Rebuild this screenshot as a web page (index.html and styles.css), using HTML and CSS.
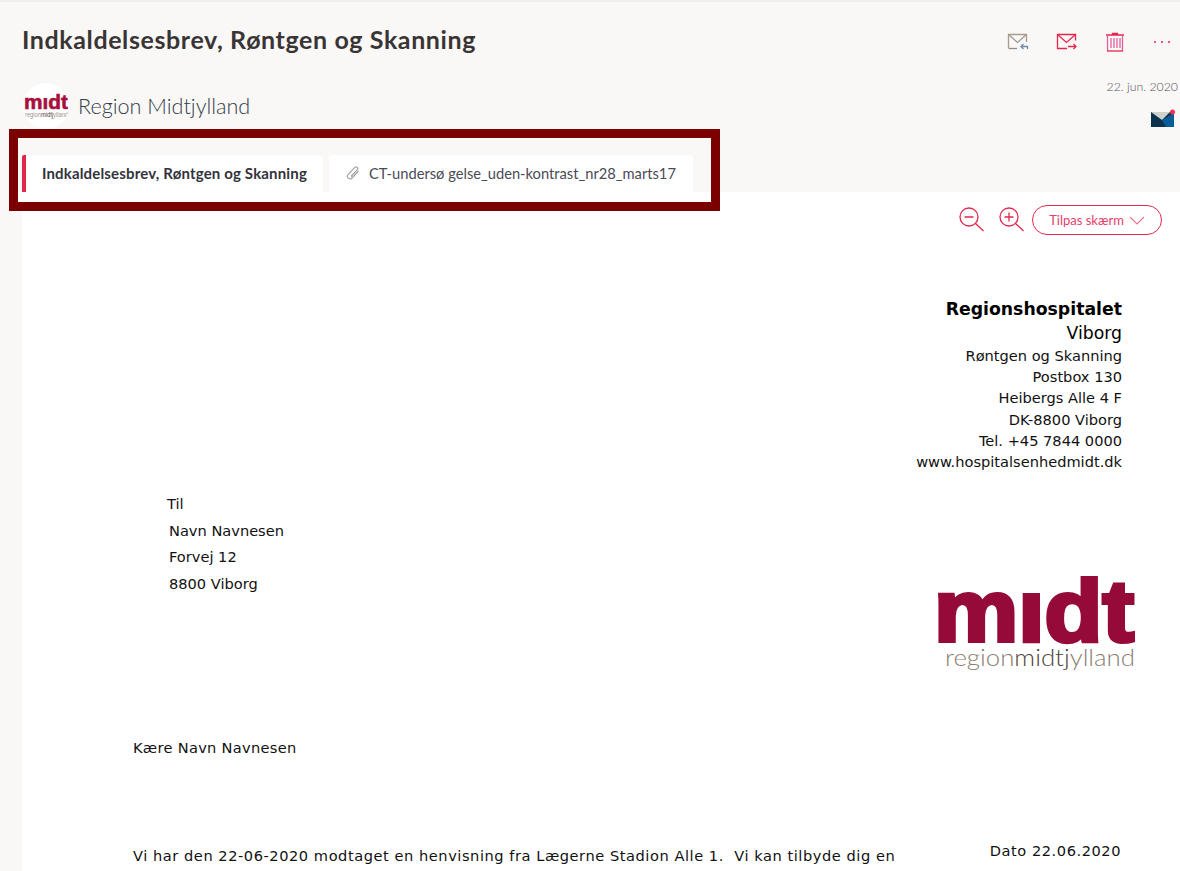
FILE: index.html
```html
<!DOCTYPE html>
<html lang="da">
<head>
<meta charset="utf-8">
<title>Indkaldelsesbrev, Røntgen og Skanning</title>
<link rel="stylesheet" href="styles.css">
</head>
<body>
<div class="page">
  <header class="head">
    <div class="title-row">
      <h1 class="title">Indkaldelsesbrev, Røntgen og Skanning</h1>
      <div class="actions">
        <svg class="act" viewBox="0 0 22 18" fill="none" stroke="#8c8c8c" stroke-width="1.300"><path d="M1.500 15V1.500h18V9" stroke="#a89c8c"/><path d="M1.500 15.500H10"/><path d="M1.500 1.500l9 8 9-8" stroke="#9a9a96"/><path d="M20.500 16v-2.500h-6M16.500 11l-2.500 2.500 2.500 2.500" stroke="#6f8aa6"/></svg>
        <svg class="act" viewBox="0 0 22 18" fill="none" stroke="#e5264c" stroke-width="1.300"><path d="M11 15.500H1.500V1.500h18v6"/><path d="M1.500 1.500l9 8 9-8"/><path d="M12 13.500h8M17.500 11l2.500 2.500-2.500 2.500"/></svg>
        <svg class="act trash" viewBox="0 0 20 20" fill="none" stroke="#e0609f" stroke-width="1.300"><path d="M1 3h18M7.500 2.500V1.500h5v1" stroke="#e5264c"/><path d="M2.500 3.500V19M17.500 3.500V19"/><path d="M6 6v10M9 6v10M12 6v10M15 6v10"/><path d="M2 19h16" stroke="#e5264c"/></svg>
        <span class="dots"><i></i><i></i><i></i></span>
      </div>
    </div>
    <div class="sender-row">
      <div class="sender">
        <div class="avatar">
          <svg viewBox="0 0 46 46" width="46" height="46">
            <text x="1" y="26" class="av-mark" textLength="44" lengthAdjust="spacingAndGlyphs">midt</text>
            <rect x="19" y="6" width="6.500" height="9" fill="#fff"/>
            <text x="2" y="34" class="av-sub" textLength="43" lengthAdjust="spacingAndGlyphs">region<tspan class="av-dark">midtj</tspan>ylland</text>
          </svg>
        </div>
        <span class="sender-name">Region Midtjylland</span>
      </div>
      <div class="meta">
        <span class="date">22. jun. 2020</span>
        <svg class="mail" viewBox="0 0 24 18" width="24" height="18">
          <path d="M0 3h23v15H0z" fill="#0b3350"/>
          <path d="M0 3h19L11 11z" fill="#d0d0cc"/>
          <path d="M23 4v14h-8l-4-7z" fill="#0a5c96"/>
          <circle cx="21.500" cy="3" r="2.500" fill="#f2304f"/>
        </svg>
      </div>
    </div>
    <nav class="tabs">
      <div class="tab active">Indkaldelsesbrev, Røntgen og Skanning</div>
      <div class="tab">
        <svg class="clip" viewBox="0 0 14 14" fill="none" stroke="#a3a3a3" stroke-width="1.200"><path d="M12.500 5L6 12a2.600 2.600 0 0 1-3.800-3.600L8.800 1.400a1.700 1.700 0 0 1 2.500 2.300L5 10.500"/></svg>
        CT-undersø gelse_uden-kontrast_nr28_marts17
      </div>
    </nav>
  </header>

  <main class="viewer">
    <div class="tools">
      <svg class="zoom" viewBox="0 0 26 26" fill="none" stroke="#e5264c" stroke-width="1.300"><circle cx="10" cy="10" r="9"/><path d="M5.500 10h9M16.500 16.500l8 7.500"/></svg>
      <svg class="zoom" viewBox="0 0 26 26" fill="none" stroke="#e5264c" stroke-width="1.300"><circle cx="10" cy="10" r="9"/><path d="M5.500 10h9M10 5.500v9M16.500 16.500l8 7.500"/></svg>
      <button class="fit">Tilpas skærm
        <svg viewBox="0 0 16 9" width="16" height="9" fill="none" stroke="#e8738a" stroke-width="1.100"><path d="M1 1l7 7 7-7"/></svg>
      </button>
    </div>

    <article class="letter">
      <address class="org">
        <strong class="org-name">Regionshospitalet</strong>
        <span class="org-city">Viborg</span>
        <span>Røntgen og Skanning</span>
        <span>Postbox 130</span>
        <span>Heibergs Alle 4 F</span>
        <span>DK-8800 Viborg</span>
        <span>Tel. +45 7844 0000</span>
        <span>www.hospitalsenhedmidt.dk</span>
      </address>

      <div class="mid">
        <div class="recipient">
          <p class="to">Til</p>
          <p>Navn Navnesen</p>
          <p>Forvej 12</p>
          <p>8800 Viborg</p>
        </div>
        <svg class="logo" viewBox="-6 -20 204 116" width="204" height="116">
          <text x="-4" y="65" class="logo-mark" textLength="200" lengthAdjust="spacingAndGlyphs">midt</text>
          <rect x="80" y="-4" width="27" height="19" fill="#fff"/>
          <text x="7" y="90" class="logo-sub" textLength="190" lengthAdjust="spacingAndGlyphs">region<tspan class="logo-dark">midtj</tspan>ylland</text>
        </svg>
      </div>

      <p class="greet">Kære Navn Navnesen</p>

      <div class="body-row">
        <p class="para">Vi har den 22-06-2020 modtaget en henvisning fra Lægerne Stadion Alle 1.&nbsp; Vi kan tilbyde dig en</p>
        <p class="dato">Dato 22.06.2020</p>
      </div>
    </article>
  </main>

  <div class="frame"></div>
</div>
</body>
</html>
```

FILE: styles.css
```css
* { box-sizing: border-box; }
html, body { margin: 0; padding: 0; height: 100%; overflow: hidden; }
body { background: #f9f8f6; font-family: "Lato", "Open Sans", sans-serif; color: #33333b; }
.page { position: relative; height: 871px; overflow: hidden; border-top: 2px solid #eeeeee; }

.head { padding: 0 2px 0 22px; height: 190px; display: flex; flex-direction: column; }
.title-row { display: flex; justify-content: space-between; align-items: flex-start; height: 74px; }
.title { margin: 21px 0 0; font-size: 25px; line-height: 32px; font-weight: 700; color: #3a3535; letter-spacing: 0.6px; }
.actions { display: flex; align-items: center; gap: 27px; margin: 30px 0 0; padding-right: 8px; }
.act { width: 22px; height: 18px; display: block; }
.trash { width: 20px; height: 20px; }
.dots { display: flex; gap: 4.5px; padding-left: 2px; }
.dots i { width: 2.5px; height: 2.5px; background: #e5264c; border-radius: 50%; display: block; }

.sender-row { display: flex; justify-content: space-between; height: 79px; }
.sender { display: flex; align-items: flex-start; gap: 9px; margin-left: 1px; margin-top: 7px; }
.avatar { width: 46px; height: 46px; border-radius: 50%; background: #fff; flex: none; overflow: hidden; }
.av-mark { font: 700 21px "Liberation Sans", sans-serif; fill: #a80f3c; stroke: #a80f3c; stroke-width: 0.6; }
.av-sub { font: 400 6.500px "Liberation Sans", sans-serif; fill: #9a9086; }
.av-dark { fill: #4e4333; }
.sender-name { font-size: 21.600px; line-height: 26px; color: #333b4a; font-weight: 300; margin-top: 10px; }
.meta { display: flex; flex-direction: column; align-items: flex-end; }
.date { font-size: 12.300px; line-height: 16px; color: #55555c; font-weight: 300; margin-top: 3px; }
.mail { margin-top: 14px; margin-right: 3px; }

.tabs { display: flex; gap: 6px; height: 37px; }
.tab { background: #fff; border-radius: 4px 4px 0 0; height: 37px; font-size: 14.700px; padding: 0 16px 2px 17px; color: #4a4a55; display: flex; align-items: center; gap: 9px; white-space: nowrap; width: 364px; }
.tab.active { width: 301px; border-left: 4px solid #e0264a; padding-left: 16px; font-size: 15px; letter-spacing: 0.16px; font-weight: 700; color: #33333b; border-top-left-radius: 2px; }
.clip { width: 14px; height: 14px; flex: none; }

.viewer { margin-left: 22px; background: #fff; height: 679px; overflow: hidden; }
.tools { display: flex; justify-content: flex-end; align-items: center; gap: 14px; height: 56px; padding: 0 18px 0 0; }
.zoom { width: 26px; height: 26px; display: block; }
.fit { font: 400 13px "Lato", sans-serif; color: #e5406a; background: #fff; border: 1px solid #e5264c; border-radius: 15px; height: 30px; width: 130px; padding: 0; display: flex; align-items: center; justify-content: center; gap: 5px; margin-left: -7px; }

.letter { font-family: "DejaVu Sans", Verdana, sans-serif; font-size: 14.600px; color: #111; }
.org { font-style: normal; display: flex; flex-direction: column; align-items: flex-end; padding-right: 58px; margin-top: 49px; line-height: 21.200px; }
.org-name { font-size: 17.300px; line-height: 24px; color: #000; }
.org-city { font-size: 17.300px; line-height: 24px; color: #000; }

.mid { display: flex; justify-content: space-between; align-items: flex-start; margin-top: 19px; padding: 0 44px 0 147px; }
.recipient p { margin: 0; line-height: 26.500px; }
.recipient .to { margin-left: -2px; }
.logo { margin-top: 65px; display: block; }
.logo-mark { font: 700 88px "Liberation Sans", sans-serif; fill: #950a38; stroke: #950a38; stroke-width: 4; }
.logo-sub { font: 300 23px "Lato", sans-serif; fill: #8a7e70; }
.logo-dark { fill: #4e4333; }

.greet { margin: 66px 0 0 111px; line-height: 20px; letter-spacing: 0.3px; }
.body-row { display: flex; justify-content: space-between; padding: 0 59px 0 111px; margin-top: 88px; }
.para, .dato { margin: 0; line-height: 20px; white-space: nowrap; letter-spacing: 0.55px; }
.dato { margin-top: -5px; }

.frame { position: absolute; left: 9px; top: 127px; width: 711px; height: 82px; border: 9px solid #7b0000; }
.frame::after { content: ""; position: absolute; left: 0; bottom: 0; width: 4px; height: 10px; background: #fff; }
```
